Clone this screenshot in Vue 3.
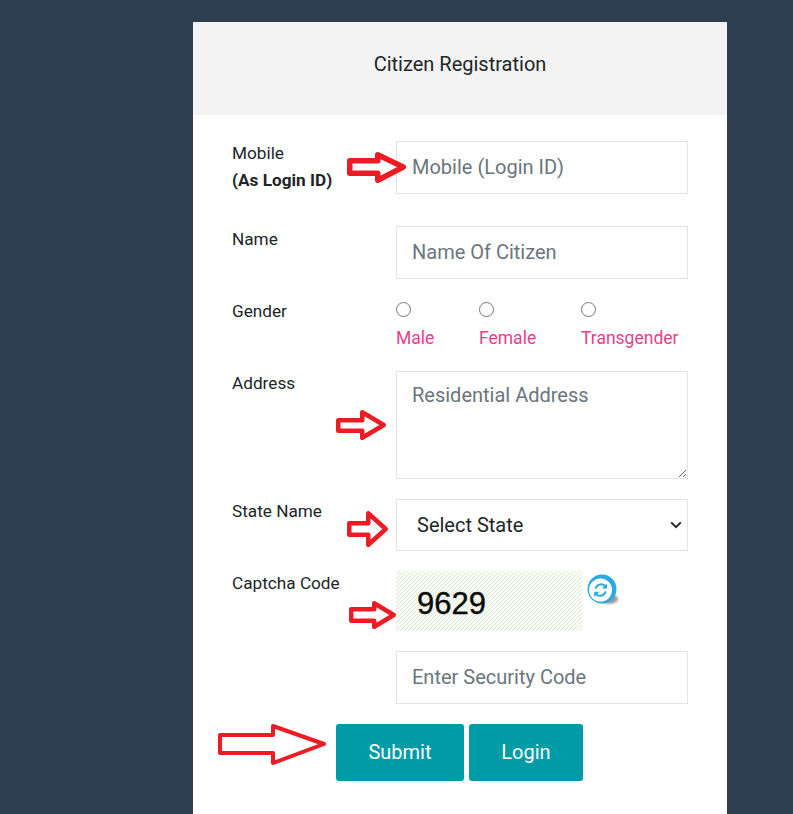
<script setup>
const arrows = [
  { left: 347, tailTop: 158, tailBottom: 176, base: 375, top: 152, bottom: 183, tip: 406, mid: 167, w: 5.5 },
  { left: 336, tailTop: 418, tailBottom: 433, base: 360, top: 410, bottom: 440, tip: 386, mid: 425, w: 4.5 },
  { left: 347, tailTop: 521, tailBottom: 537, base: 366, top: 511, bottom: 547, tip: 388, mid: 529, w: 4.5 },
  { left: 349, tailTop: 607, tailBottom: 623, base: 372, top: 601, bottom: 629, tip: 396, mid: 615, w: 4.5 },
  { left: 218, tailTop: 733, tailBottom: 755, base: 271, top: 724, bottom: 765, tip: 326, mid: 744, w: 4 }
]

// measured values are outer edges, so pull the stroke centre line inwards
const arrowPoints = (a) => {
  const s = a.w / 2
  return [
    [a.left + s, a.tailTop + s],
    [a.base + s, a.tailTop + s],
    [a.base + s, a.top + s],
    [a.tip - s, a.mid],
    [a.base + s, a.bottom - s],
    [a.base + s, a.tailBottom - s],
    [a.left + s, a.tailBottom - s]
  ]
    .map((p) => p.join(','))
    .join(' ')
}

const genders = [
  { label: 'Male', width: 83 },
  { label: 'Female', width: 102 },
  { label: 'Transgender', width: 107 }
]
</script>

<template>
  <div class="page">
    <div class="card">
      <div class="card-header">Citizen Registration</div>
      <form class="reg-form" @submit.prevent>
        <div class="form-row row-mobile">
          <label>Mobile<br /><b>(As Login ID)</b></label>
          <input type="text" class="field" placeholder="Mobile (Login ID)" />
        </div>

        <div class="form-row row-name">
          <label>Name</label>
          <input type="text" class="field" placeholder="Name Of Citizen" />
        </div>

        <div class="form-row row-gender">
          <label>Gender</label>
          <div class="gender-options">
            <div
              v-for="g in genders"
              :key="g.label"
              class="gender-option"
              :style="{ width: g.width + 'px' }"
            >
              <input type="radio" name="gender" />
              <span>{{ g.label }}</span>
            </div>
          </div>
        </div>

        <div class="form-row row-address">
          <label>Address</label>
          <textarea class="field field-area" placeholder="Residential Address"></textarea>
        </div>

        <div class="form-row row-state">
          <label>State Name</label>
          <div class="select-wrap">
            <select class="field field-select">
              <option>Select State</option>
            </select>
            <svg class="chevron" width="12" height="8" viewBox="0 0 12 8">
              <path d="M1.2 1.4 6 6.2l4.8-4.8" fill="none" stroke="#212529" stroke-width="2" />
            </svg>
          </div>
        </div>

        <div class="form-row row-captcha">
          <label>Captcha Code</label>
          <div class="captcha-wrap">
            <div class="captcha-box">9629</div>
            <svg class="refresh" width="36" height="34" viewBox="0 0 36 34">
              <defs>
                <filter id="blur-shadow" x="-30%" y="-30%" width="160%" height="160%">
                  <feGaussianBlur stdDeviation="1.2" />
                </filter>
              </defs>
              <ellipse cx="22" cy="25" rx="9" ry="5" fill="#9a9a9a" filter="url(#blur-shadow)" />
              <circle cx="15" cy="15" r="14.5" fill="#2ba9e1" />
              <circle cx="13.5" cy="16" r="11.5" fill="#fff" />
              <path d="M8.6 14.8a5.6 5.6 0 0 1 9.2-3" fill="none" stroke="#2ba9e1" stroke-width="2" />
              <path d="M20 9.2v5.2h-5.2z" fill="#2ba9e1" />
              <path d="M18.6 17.4a5.6 5.6 0 0 1-9.2 3" fill="none" stroke="#2ba9e1" stroke-width="2" />
              <path d="M7.2 23v-5.2h5.2z" fill="#2ba9e1" />
            </svg>
          </div>
        </div>

        <div class="form-row row-code">
          <span></span>
          <input type="text" class="field" placeholder="Enter Security Code" />
        </div>

        <div class="form-actions">
          <button type="submit" class="btn btn-submit">Submit</button>
          <button type="button" class="btn btn-login">Login</button>
        </div>
      </form>
    </div>

    <svg class="arrows" width="793" height="814" viewBox="0 0 793 814">
      <polygon
        v-for="(a, i) in arrows"
        :key="i"
        :points="arrowPoints(a)"
        fill="#fff"
        stroke="#ed1c24"
        :stroke-width="a.w"
        stroke-linejoin="round"
      />
    </svg>
  </div>
</template>

<style>
html,
body {
  margin: 0;
  background: #2d3e50;
}
</style>

<style scoped>
.page {
  position: relative;
  width: 793px;
  height: 814px;
  overflow: hidden;
  padding-top: 22px;
  box-sizing: border-box;
  background: #2d3e50;
  font-family: Roboto, "Liberation Sans", sans-serif;
}

.card {
  width: 534px;
  height: 792px;
  margin-left: 193px;
  background: #fff;
}

.card-header {
  height: 93px;
  box-sizing: border-box;
  padding-bottom: 10px;
  display: flex;
  align-items: center;
  justify-content: center;
  background: #f3f3f3;
  font-size: 20px;
  color: #212529;
}

.reg-form {
  padding: 26px 39px 0;
}

.form-row {
  display: grid;
  grid-template-columns: 164px 292px;
}

.form-row label {
  font-size: 17.2px;
  line-height: 27px;
  color: #212529;
}

.field {
  width: 292px;
  height: 53px;
  box-sizing: border-box;
  padding: 0 15px 2px;
  border: 1px solid #e4e4e4;
  border-radius: 0;
  outline: none;
  background: #fff;
  font-family: inherit;
  font-size: 20px;
  color: #212529;
}

.field::placeholder {
  color: #6c757d;
  opacity: 1;
}

.row-mobile label {
  margin-top: -1px;
}

.row-name {
  margin-top: 32px;
}

.row-gender {
  margin-top: 23px;
}

.row-gender label {
  margin-top: -4px;
}

.gender-options {
  display: flex;
}

.gender-option {
  display: flex;
  flex-direction: column;
  align-items: flex-start;
  font-size: 17.5px;
  color: #e83e8c;
}

.gender-option input {
  width: 15px;
  height: 15px;
  margin: 0 0 11px;
}

.row-address {
  margin-top: 23px;
}

.row-address label,
.row-state label,
.row-captcha label {
  margin-top: -1px;
}

.field-area {
  display: block;
  height: 108px;
  padding-top: 10px;
  line-height: 27px;
}

.row-state {
  margin-top: 20px;
}

.select-wrap {
  position: relative;
  height: 52px;
}

.field-select {
  display: block;
  height: 52px;
  padding: 0 34px 0 20px;
  appearance: none;
  color: #212529;
}

.chevron {
  position: absolute;
  top: 22px;
  right: 6px;
  pointer-events: none;
}

.row-captcha {
  margin-top: 20px;
}

.captcha-wrap {
  display: flex;
  align-items: flex-start;
  width: 292px;
}

.captcha-box {
  width: 186px;
  height: 60px;
  box-sizing: border-box;
  padding: 16px 0 0 21px;
  font-family: "Liberation Sans", sans-serif;
  font-size: 31px;
  line-height: 33px;
  -webkit-text-stroke: 0.4px #0a0a0a;
  color: #0a0a0a;
  background-color: #fbfdf8;
  background-image: linear-gradient(135deg, transparent 0 38%, #dde9ce 38% 62%, transparent 62%);
  background-size: 4px 4px;
}

.refresh {
  margin: 3px 0 0 5px;
}

.row-code {
  margin-top: 20px;
}

.form-actions {
  display: flex;
  gap: 5px;
  margin: 20px 0 0 104px;
}

.btn {
  height: 57px;
  padding: 0 0 2px;
  border: none;
  border-radius: 3px;
  background: #009ca6;
  color: #fff;
  font-family: inherit;
  font-size: 20px;
  cursor: pointer;
}

.btn-submit {
  width: 128px;
}

.btn-login {
  width: 114px;
}

.arrows {
  position: absolute;
  top: 0;
  left: 0;
  pointer-events: none;
}
</style>
